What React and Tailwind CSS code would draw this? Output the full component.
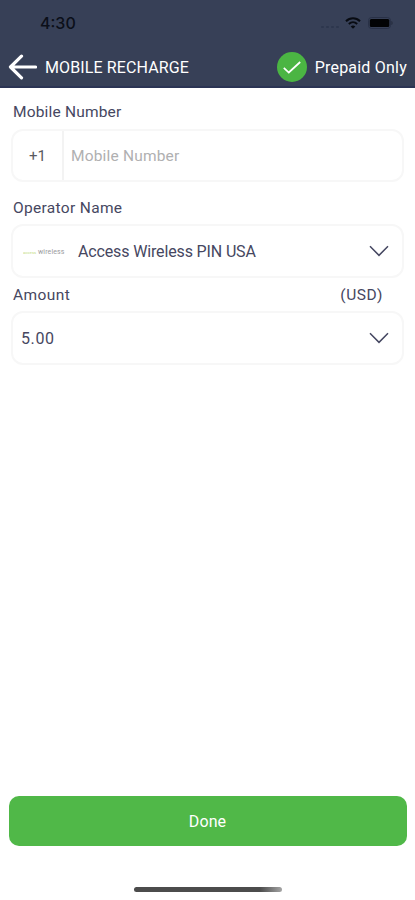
import React from "react";

const ChevronDown = () => (
  <svg className="h-3 w-5" viewBox="0 0 20 12" fill="none" aria-hidden="true">
    <path d="M1 1.3L10 10.4L19 1.3" stroke="#454761" strokeWidth="1.5" />
  </svg>
);

const StatusBar = () => (
  <div className="flex h-[46px] items-center justify-between pl-10 pr-[21px]">
    <span className="font-['Inter'] text-[16px] font-medium leading-none text-[#0b0f19]">
      4:30
    </span>
    <div className="flex items-center">
      <div className="mr-[6px] mt-2 flex gap-[2px]">
        {[0, 1, 2, 3].map((dot) => (
          <span key={dot} className="h-[2px] w-[3px] rounded-full bg-[#2d364d]" />
        ))}
      </div>
      <svg className="h-3 w-4" viewBox="0 0 16 12" fill="none" aria-hidden="true">
        <path d="M1 4.2C5 0.3 11 0.3 15 4.2" stroke="#080b12" strokeWidth="2.1" />
        <path d="M3.8 7C6.3 4.7 9.7 4.7 12.2 7" stroke="#080b12" strokeWidth="1.9" />
        <path d="M8 11.8L5.7 9.4C7 8.2 9 8.2 10.3 9.4Z" fill="#080b12" />
      </svg>
      <svg className="ml-[7px] h-3 w-[26px]" viewBox="0 0 26 12" fill="none" aria-hidden="true">
        <rect x="0.5" y="0.5" width="22" height="11" rx="3" stroke="#293147" />
        <rect x="1.8" y="2" width="19.5" height="8" rx="1.5" fill="#020305" />
        <path d="M23.5 4V8C24.8 7.6 24.8 4.4 23.5 4Z" fill="#202737" />
      </svg>
    </div>
  </div>
);

const Header = () => (
  <header className="h-[88px] border-b-2 border-[#2b3454] bg-[#374057]">
    <StatusBar />
    <div className="flex h-[42px] items-center pl-2 pr-2 text-white">
      <button type="button" aria-label="Back" className="mr-[8px]">
        <svg className="h-[26px] w-[29px]" viewBox="0 0 29 26" fill="none">
          <path
            d="M13.5 2.2L2.5 13L13.5 23.8M2.8 13H27.5"
            stroke="white"
            strokeWidth="3.2"
            strokeLinecap="round"
            strokeLinejoin="round"
          />
        </svg>
      </button>
      <h1 className="pt-px text-[16px] leading-none tracking-[0.12px]">MOBILE RECHARGE</h1>
      <div className="ml-auto flex items-center">
        <span className="mr-2 flex h-[30px] w-[30px] items-center justify-center rounded-full bg-[#4bb543]">
          <svg className="h-[13px] w-[18px]" viewBox="0 0 18 13" fill="none" aria-hidden="true">
            <path d="M0.8 6.8L5.8 11.5L17.2 1" stroke="white" strokeWidth="1.7" />
          </svg>
        </span>
        <span className="pt-px text-[16px] leading-none tracking-[0.22px]">Prepaid Only</span>
      </div>
    </div>
  </header>
);

const OperatorLogo = () => (
  <div className="flex w-[42px] items-baseline pt-[3px] leading-none">
    <span className="w-[15px] overflow-hidden text-[4px] tracking-[0.1px] text-[#c3dc83]">access</span>
    <span className="text-[7px] tracking-[0.1px] text-[#9a9a9d]">wireless</span>
  </div>
);

const boxClass =
  "flex items-center rounded-xl border-2 border-[#f7f7f7] bg-white text-[16px]";

const App = () => {
  return (
    <div className="flex h-[900px] w-full flex-col overflow-hidden bg-white font-['Roboto',sans-serif] text-[#464761]">
      <Header />

      <main className="flex flex-1 flex-col px-[11px]">
        <label className="mt-[14px] pl-[2px] text-[15.5px] leading-5 tracking-[0.18px]">Mobile Number</label>
        <div className={`${boxClass} mt-[7px] h-[53px]`}>
          <span className="flex h-full w-[51px] items-center justify-center border-r-2 border-[#f3f3f3] pt-px text-[15px] text-[#5a5a60]">
            +1
          </span>
          <input
            type="text"
            placeholder="Mobile Number"
            className="min-w-0 flex-1 pl-[7px] pt-[2px] text-[15.5px] tracking-[0.18px] outline-none placeholder:text-[#b0b0b1]"
          />
        </div>

        <label className="mt-[15px] pl-[2px] pt-px text-[15.5px] leading-5 tracking-[0.33px]">Operator Name</label>
        <div className={`${boxClass} mt-[6px] h-[54px] pl-[10px] pr-[13px]`}>
          <OperatorLogo />
          <span className="ml-[13px] flex-1 pt-[2px] tracking-[-0.14px]">Access Wireless PIN USA</span>
          <ChevronDown />
        </div>

        <div className="mt-[7px] flex justify-between pl-[2px] pr-[21px] text-[15.5px] leading-5">
          <span className="tracking-[0.4px]">Amount</span>
          <span className="tracking-[0.5px]">(USD)</span>
        </div>
        <div className={`${boxClass} mt-[6px] h-[54px] pl-2 pr-[13px]`}>
          <span className="flex-1 pt-[2px] tracking-[0.6px]">5.00</span>
          <ChevronDown />
        </div>
      </main>

      <footer className="flex h-[104px] flex-col items-center px-2">
        <button
          type="button"
          className="h-[50px] w-[398px] rounded-[10px] bg-[#50b848] pt-px text-[16px] tracking-[0.1px] text-white"
        >
          Done
        </button>
        <div className="mt-[41px] h-[5px] w-[148px] rounded-full bg-gradient-to-r from-[#4c4c4c] from-85% to-[#a5a5a5]" />
      </footer>
    </div>
  );
};

export default App;
